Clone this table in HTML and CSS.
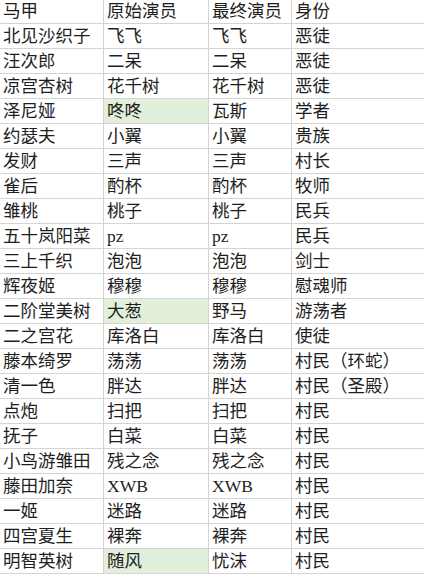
FILE: index.html
```html
<!DOCTYPE html>
<html lang="zh">
<head>
<meta charset="utf-8">
<title>马甲表</title>
<link rel="stylesheet" href="styles.css">
</head>
<body>
<div class="sheet">
  <div class="row head"><div class="c">马甲</div><div class="c">原始演员</div><div class="c">最终演员</div><div class="c">身份</div></div>
  <div class="row"><div class="c">北见沙织子</div><div class="c">飞飞</div><div class="c">飞飞</div><div class="c">恶徒</div></div>
  <div class="row"><div class="c">汪次郎</div><div class="c">二呆</div><div class="c">二呆</div><div class="c">恶徒</div></div>
  <div class="row"><div class="c">凉宫杏树</div><div class="c">花千树</div><div class="c">花千树</div><div class="c">恶徒</div></div>
  <div class="row"><div class="c">泽尼娅</div><div class="c hl">咚咚</div><div class="c">瓦斯</div><div class="c">学者</div></div>
  <div class="row"><div class="c">约瑟夫</div><div class="c">小翼</div><div class="c">小翼</div><div class="c">贵族</div></div>
  <div class="row"><div class="c">发财</div><div class="c">三声</div><div class="c">三声</div><div class="c">村长</div></div>
  <div class="row"><div class="c">雀后</div><div class="c">酌杯</div><div class="c">酌杯</div><div class="c">牧师</div></div>
  <div class="row"><div class="c">雏桃</div><div class="c">桃子</div><div class="c">桃子</div><div class="c">民兵</div></div>
  <div class="row"><div class="c">五十岚阳菜</div><div class="c">pz</div><div class="c">pz</div><div class="c">民兵</div></div>
  <div class="row"><div class="c">三上千织</div><div class="c">泡泡</div><div class="c">泡泡</div><div class="c">剑士</div></div>
  <div class="row"><div class="c">辉夜姬</div><div class="c">穆穆</div><div class="c">穆穆</div><div class="c">慰魂师</div></div>
  <div class="row"><div class="c">二阶堂美树</div><div class="c hl">大葱</div><div class="c">野马</div><div class="c">游荡者</div></div>
  <div class="row"><div class="c">二之宫花</div><div class="c">库洛白</div><div class="c">库洛白</div><div class="c">使徒</div></div>
  <div class="row"><div class="c">藤本绮罗</div><div class="c">荡荡</div><div class="c">荡荡</div><div class="c">村民（环蛇）</div></div>
  <div class="row"><div class="c">清一色</div><div class="c">胖达</div><div class="c">胖达</div><div class="c">村民（圣殿）</div></div>
  <div class="row"><div class="c">点炮</div><div class="c">扫把</div><div class="c">扫把</div><div class="c">村民</div></div>
  <div class="row"><div class="c">抚子</div><div class="c">白菜</div><div class="c">白菜</div><div class="c">村民</div></div>
  <div class="row"><div class="c">小鸟游雏田</div><div class="c">残之念</div><div class="c">残之念</div><div class="c">村民</div></div>
  <div class="row"><div class="c">藤田加奈</div><div class="c">XWB</div><div class="c">XWB</div><div class="c">村民</div></div>
  <div class="row"><div class="c">一姬</div><div class="c">迷路</div><div class="c">迷路</div><div class="c">村民</div></div>
  <div class="row"><div class="c">四宫夏生</div><div class="c">裸奔</div><div class="c">裸奔</div><div class="c">村民</div></div>
  <div class="row"><div class="c">明智英树</div><div class="c hl">随风</div><div class="c">忧沫</div><div class="c">村民</div></div>
</div>
</body>
</html>
```

FILE: styles.css
```css
html, body {
  margin: 0;
  padding: 0;
  background: #ffffff;
}
body {
  font-family: "Liberation Serif", "Noto Sans CJK SC", sans-serif;
  font-size: 17.5px;
  color: #1e1e1e;
  overflow: hidden;
}
.sheet {
  display: flex;
  flex-direction: column;
  width: 424px;
}
.row {
  display: grid;
  grid-template-columns: 104px 105px 83px 1fr;
  height: 25px;
}
.row.head {
  height: 24px;
}
.c {
  border-right: 1px solid #d4d4d4;
  border-bottom: 1px solid #d4d4d4;
  padding-left: 3px;
  line-height: 25px;
  white-space: nowrap;
  overflow: hidden;
}
.head .c {
  line-height: 23px;
}
.c:last-child {
  border-right: none;
}
.hl {
  background: #e2efda;
}
```
